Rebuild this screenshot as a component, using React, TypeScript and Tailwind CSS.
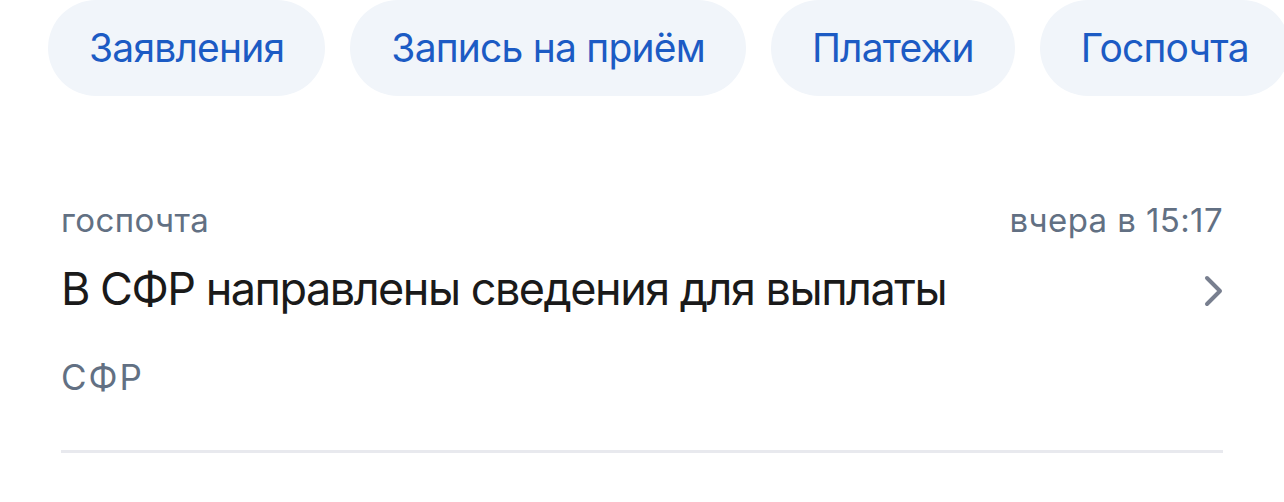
import React from "react";

const pills = ["Заявления", "Запись на приём", "Платежи", "Госпочта"];

export default function App() {
  return (
    <div
      className="w-[1284px] h-[502px] bg-white overflow-hidden"
      style={{ fontFamily: "Inter, 'Noto Sans', sans-serif" }}
    >
      <div className="flex gap-[25px] pl-[48px] overflow-hidden whitespace-nowrap">
        {pills.map((p) => (
          <div
            key={p}
            className="shrink-0 h-[96px] px-[41px] rounded-full bg-[#f1f5fa] flex items-center text-[39px] text-[#1c5bc4] tracking-[-0.8px]"
          >
            {p}
          </div>
        ))}
      </div>
      <div className="px-[61px] pt-[104px]">
        <div className="flex justify-between items-baseline text-[33px] leading-[40px] text-[#627083] tracking-[0.4px]">
          <span>госпочта</span>
          <span>вчера в 15:17</span>
        </div>
        <div className="flex items-center justify-between mt-[21px]">
          <span className="text-[45px] leading-[56px] text-[#1a1a1a] tracking-[-1.5px]">
            В СФР направлены сведения для выплаты
          </span>
          <svg width="20" height="34" viewBox="0 0 20 34" className="mt-[4px]">
            <path
              d="M4 4 L17 17 L4 30"
              fill="none"
              stroke="#787f8f"
              strokeWidth="4"
              strokeLinecap="round"
              strokeLinejoin="round"
            />
          </svg>
        </div>
        <div className="mt-[40px] text-[35px] leading-[40px] text-[#627083] tracking-[2px]">СФР</div>
        <div className="mt-[53px] h-[3px] bg-[#e8e9ee]" />
      </div>
    </div>
  );
}
